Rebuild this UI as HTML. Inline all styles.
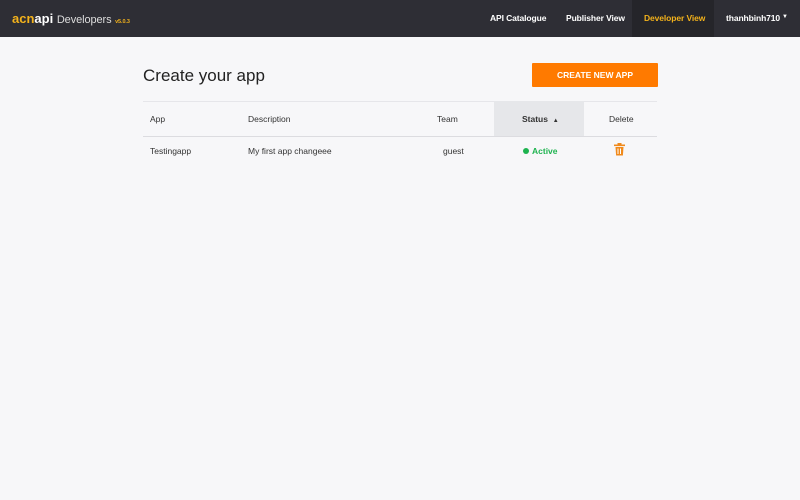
<!DOCTYPE html><html><head><style>
body{margin:0;width:800px;height:500px;background:#f7f7f9;font-family:"Liberation Sans",sans-serif;overflow:hidden;position:relative}
.nav{position:absolute;left:0;top:0;width:800px;height:37px;background:#2e2e35}
.nav span{position:absolute;top:13px;font-size:8.5px;font-weight:bold;color:#fff;letter-spacing:-0.1px}
.logo{position:absolute;left:12px;top:11px;font-size:13px;color:#e8e8e8}
.act{position:absolute;left:632px;top:0;width:82px;height:37px;background:#25252a}
h1{position:absolute;left:143px;top:66px;margin:0;font-size:17px;font-weight:normal;color:#222}
.btn{position:absolute;left:532px;top:63px;width:126px;height:24px;background:#ff7a00;color:#fff;font-size:8.5px;font-weight:bold;text-align:center;line-height:24px;border-radius:1px}
.t{position:absolute;font-size:8.5px;color:#333}
</style></head><body>
<div class="nav"><div class="act"></div>
<div class="logo"><b style="color:#f3b21b">acn</b><b style="color:#fff">api</b> <span style="position:static;font-size:11px;font-weight:normal;color:#ddd">Developers</span> <span style="position:static;font-size:5.5px;color:#f3b21b">v5.0.3</span></div>
<span style="left:490px">API Catalogue</span><span style="left:566px">Publisher View</span><span style="left:644px;color:#f3b21b">Developer View</span><span style="left:726px">thanhbinh710</span><span style="left:782px;top:14px;font-size:6px">▼</span></div>
<h1>Create your app</h1><div class="btn">CREATE NEW APP</div>
<div style="position:absolute;left:143px;top:101px;width:514px;height:1px;background:#e6e6ea"></div>
<div style="position:absolute;left:494px;top:101px;width:90px;height:35px;background:#e6e7ea"></div>
<div style="position:absolute;left:143px;top:136px;width:514px;height:1px;background:#dcdce0"></div>
<div class="t" style="left:150px;top:114px">App</div><div class="t" style="left:248px;top:114px">Description</div><div class="t" style="left:437px;top:114px">Team</div><div class="t" style="left:522px;top:114px;font-weight:bold">Status &nbsp;<span style="font-size:6px">▲</span></div><div class="t" style="left:609px;top:114px">Delete</div>
<div class="t" style="left:150px;top:146px">Testingapp</div><div class="t" style="left:248px;top:146px">My first app changeee</div><div class="t" style="left:443px;top:146px">guest</div>
<div class="t" style="left:523px;top:146px;color:#1db34f;font-weight:bold"><span style="display:inline-block;width:6px;height:6px;border-radius:50%;background:#1db34f;margin-right:3px"></span>Active</div>
<svg style="position:absolute;left:614px;top:143px" width="11" height="13" viewBox="0 0 11 13"><rect x="0" y="1.5" width="11" height="1.6" fill="#f08a1c"/><rect x="3.5" y="0" width="4" height="2" fill="#f08a1c"/><path d="M1.5 4h8l-.6 8.5h-6.8z" fill="#f08a1c"/><rect x="3.5" y="5.5" width="1" height="5.5" fill="#fff"/><rect x="6" y="5.5" width="1" height="5.5" fill="#fff"/></svg>
</body></html>
